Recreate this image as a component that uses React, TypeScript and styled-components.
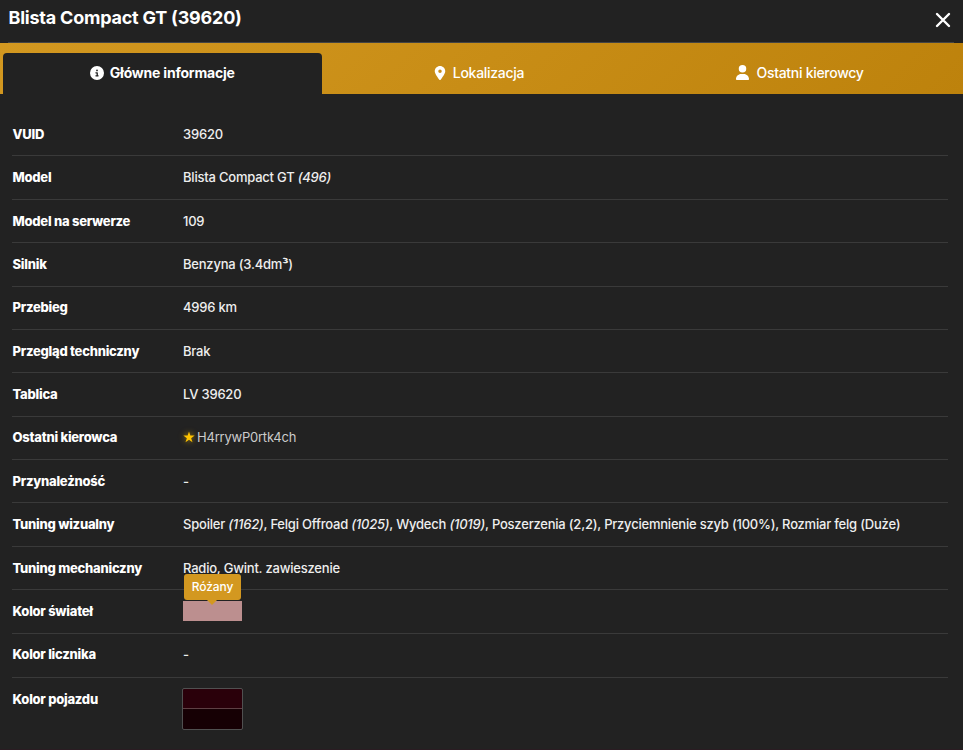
import React from 'react';
import styled, { createGlobalStyle } from 'styled-components';
import { FaCircleInfo, FaLocationDot, FaUser } from 'react-icons/fa6';

const GlobalStyle = createGlobalStyle`
  *, *::before, *::after { box-sizing: border-box; }
  body {
    margin: 0;
    background: #222222;
    color: #ffffff;
    font-family: Inter, "Liberation Sans", sans-serif;
    font-size: 13px;
    overflow: hidden;
  }
`;

const Dialog = styled.section`
  display: flex;
  flex-direction: column;
  height: 750px;
  background: #222222;
  border-bottom: 1px solid #2a1c22;
`;

const Header = styled.header`
  display: flex;
  justify-content: space-between;
  height: 43px;
  margin: 0 9px 0 8px;
  border-bottom: 1px solid #444444;
`;

const Title = styled.h1`
  margin: 8px 0 0 0.5px;
  font-size: 18px;
  line-height: 20px;
  font-weight: 700;
  letter-spacing: -0.22px;
`;

const CloseButton = styled.button`
  display: flex;
  margin: 9px 0 0;
  padding: 0;
  width: 22px;
  height: 22px;
  align-items: center;
  justify-content: center;
  border: 0;
  background: none;
  color: #ffffff;

  svg {
    width: 16px;
    height: 16px;
    stroke: currentColor;
    stroke-width: 2.4;
    stroke-linecap: round;
  }
`;

const Tabs = styled.nav`
  display: grid;
  grid-template-columns: repeat(3, 1fr);
  height: 51px;
  padding: 10px 0 0;
  background: linear-gradient(135deg, #d39820, #bd820c);
`;

const Tab = styled.button<{ $active?: boolean; $iconSize?: number }>`
  display: flex;
  align-items: center;
  justify-content: center;
  gap: 6px;
  margin: ${p => (p.$active ? '0 -0.5px 0 3px' : '0 6px 0 0')};
  padding: 0 0 2px;
  border: 0;
  border-radius: 4px 4px 0 0;
  background: ${p => (p.$active ? '#222222' : 'transparent')};
  color: #ffffff;
  font-family: inherit;
  font-size: 14px;
  font-weight: ${p => (p.$active ? 700 : 500)};
  letter-spacing: ${p => (p.$active ? '-0.2px' : '-0.29px')};

  svg { font-size: ${p => p.$iconSize ?? 14}px; }
`;

const Details = styled.dl`
  margin: 19.05px 15px 0 12px;
`;

const Row = styled.div<{ $last?: boolean; $tall?: boolean }>`
  display: grid;
  grid-template-columns: 171px 1fr;
  height: ${p => (p.$tall ? 44.375 : 43.375)}px;
  padding-top: 11.75px;
  border-bottom: ${p => (p.$last ? '0' : '1px solid #3a3a3a')};
  line-height: 18px;
`;

const Label = styled.dt`
  padding-left: 0.5px;
  font-weight: 800;
  letter-spacing: -0.25px;
`;

const Value = styled.dd`
  margin: 0;
  color: #eeeeee;
  font-weight: 500;
  letter-spacing: -0.215px;
  white-space: nowrap;
`;

const Exponent = styled.span`
  font-weight: 800;
`;

const Driver = styled.span`
  display: inline-flex;
  align-items: center;
  gap: 2px;
  color: #cccccc;
  font-weight: 400;

  svg {
    width: 12px;
    height: 12px;
    fill: #ffc400;
    filter: drop-shadow(0 0 3px #ffc400a0);
  }
`;

const LightSwatch = styled.div`
  position: relative;
  width: 59px;
  height: 20px;
  margin-top: -1px;
  background: #bc8f8f;
`;

const Tooltip = styled.div`
  position: absolute;
  left: 1px;
  bottom: 21px;
  width: 57px;
  height: 26px;
  border-radius: 3px;
  background: #d39820;
  color: #ffffff;
  font-size: 12px;
  letter-spacing: -0.1px;
  line-height: 25px;
  text-align: center;

  &::after {
    content: "";
    position: absolute;
    left: 23px;
    top: 26px;
    border: 5px solid transparent;
    border-top-color: #d39820;
    border-bottom: 0;
  }
`;

const BodySwatch = styled.div`
  width: 61px;
  height: 42px;
  margin: -2px 0 0 -1px;
  border: 1px solid #505050;
  border-radius: 2px;
  background: linear-gradient(#2a000a 0 19px, #5e4044 19px 20px, #160004 20px);
`;

const CloseIcon = () => (
  <svg viewBox="0 0 16 16" aria-hidden="true">
    <path d="M2 2 14 14M14 2 2 14" />
  </svg>
);

const StarIcon = () => (
  <svg viewBox="0 0 24 24" aria-hidden="true">
    <path d="M12 1l2.7 8.2h8.6l-7 5.1 2.7 8.2-7-5.1-7 5.1 2.7-8.2-7-5.1h8.6z" />
  </svg>
);

const details: { label: string; value: React.ReactNode; tall?: boolean }[] = [
  { label: 'VUID', value: '39620' },
  { label: 'Model', value: <>Blista Compact GT <em>(496)</em></> },
  { label: 'Model na serwerze', value: '109' },
  { label: 'Silnik', value: <>Benzyna (3.4dm<Exponent>³</Exponent>)</> },
  { label: 'Przebieg', value: '4996 km' },
  { label: 'Przegląd techniczny', value: 'Brak' },
  { label: 'Tablica', value: 'LV 39620' },
  { label: 'Ostatni kierowca', value: <Driver><StarIcon />H4rrywP0rtk4ch</Driver> },
  { label: 'Przynależność', value: '-' },
  {
    label: 'Tuning wizualny',
    value: (
      <>
        Spoiler <em>(1162)</em>, Felgi Offroad <em>(1025)</em>, Wydech <em>(1019)</em>, Poszerzenia (2,2),
        {' '}Przyciemnienie szyb (100%), Rozmiar felg (Duże)
      </>
    ),
  },
  { label: 'Tuning mechaniczny', value: 'Radio, Gwint. zawieszenie' },
  { label: 'Kolor świateł', value: <LightSwatch><Tooltip>Różany</Tooltip></LightSwatch> },
  { label: 'Kolor licznika', value: '-', tall: true },
  { label: 'Kolor pojazdu', value: <BodySwatch /> },
];

export default function App() {
  return (
    <>
      <GlobalStyle />
      <Dialog>
        <Header>
          <Title>Blista Compact GT (39620)</Title>
          <CloseButton aria-label="Zamknij"><CloseIcon /></CloseButton>
        </Header>
        <Tabs>
          <Tab $active><FaCircleInfo />Główne informacje</Tab>
          <Tab><FaLocationDot />Lokalizacja</Tab>
          <Tab $iconSize={15}><FaUser />Ostatni kierowcy</Tab>
        </Tabs>
        <Details>
          {details.map((d, i) => (
            <Row key={d.label} $tall={d.tall} $last={i === details.length - 1}>
              <Label>{d.label}</Label>
              <Value>{d.value}</Value>
            </Row>
          ))}
        </Details>
      </Dialog>
    </>
  );
}
